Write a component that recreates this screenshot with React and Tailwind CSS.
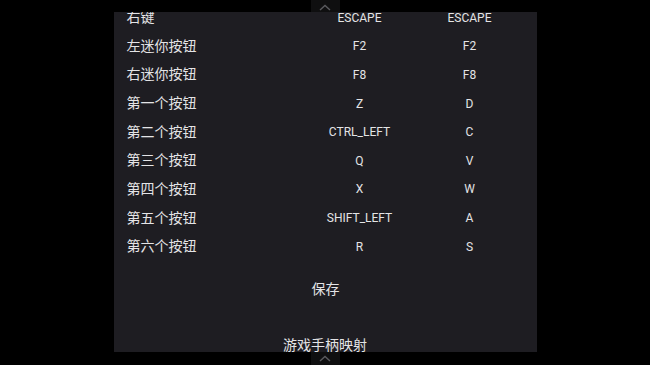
import React from "react";

const rows = [
  ["右键", "ESCAPE", "ESCAPE"],
  ["左迷你按钮", "F2", "F2"],
  ["右迷你按钮", "F8", "F8"],
  ["第一个按钮", "Z", "D"],
  ["第二个按钮", "CTRL_LEFT", "C"],
  ["第三个按钮", "Q", "V"],
  ["第四个按钮", "X", "W"],
  ["第五个按钮", "SHIFT_LEFT", "A"],
  ["第六个按钮", "R", "S"],
];

function Chevron() {
  return (
    <svg width="12" height="7" viewBox="0 0 12 7" fill="none">
      <path d="M1 6L6 1.5L11 6" stroke="#5a5a5e" strokeWidth="1.4" />
    </svg>
  );
}

export default function App() {
  return (
    <div
      className="w-[650px] h-[365px] bg-black flex flex-col items-center overflow-hidden text-[#e4e4e6]"
      style={{ fontFamily: 'Roboto, "Noto Sans CJK SC", sans-serif' }}
    >
      <div className="h-[12px] w-[423px] flex justify-center">
        <div className="w-[29px] h-[12px] bg-[#0f0f10] flex items-end justify-center pb-[1px]">
          <Chevron />
        </div>
      </div>
      <div className="w-[423px] h-[340px] bg-[#1e1d22] overflow-hidden">
        <div className="mt-[-8.6px] flex flex-col">
          {rows.map((r, i) => (
            <div key={i} className="h-[28.625px] flex items-center">
              <div className="w-[191px] pl-[13px] text-[14px]">{r[0]}</div>
              <div className="w-[110px] text-center text-[12px]">{r[1]}</div>
              <div className="w-[110px] text-center text-[12px]">{r[2]}</div>
            </div>
          ))}
          <div className="h-[57px] shrink-0 flex items-center justify-center text-[14px]">
            <span className="ml-[1px]">保存</span>
          </div>
          <div className="h-[54px] shrink-0 flex items-center justify-center text-[14px]">
            游戏手柄映射
          </div>
        </div>
      </div>
      <div className="w-[29px] h-[13px] bg-[#0f0f10] flex justify-center pt-[3px]">
        <Chevron />
      </div>
    </div>
  );
}
